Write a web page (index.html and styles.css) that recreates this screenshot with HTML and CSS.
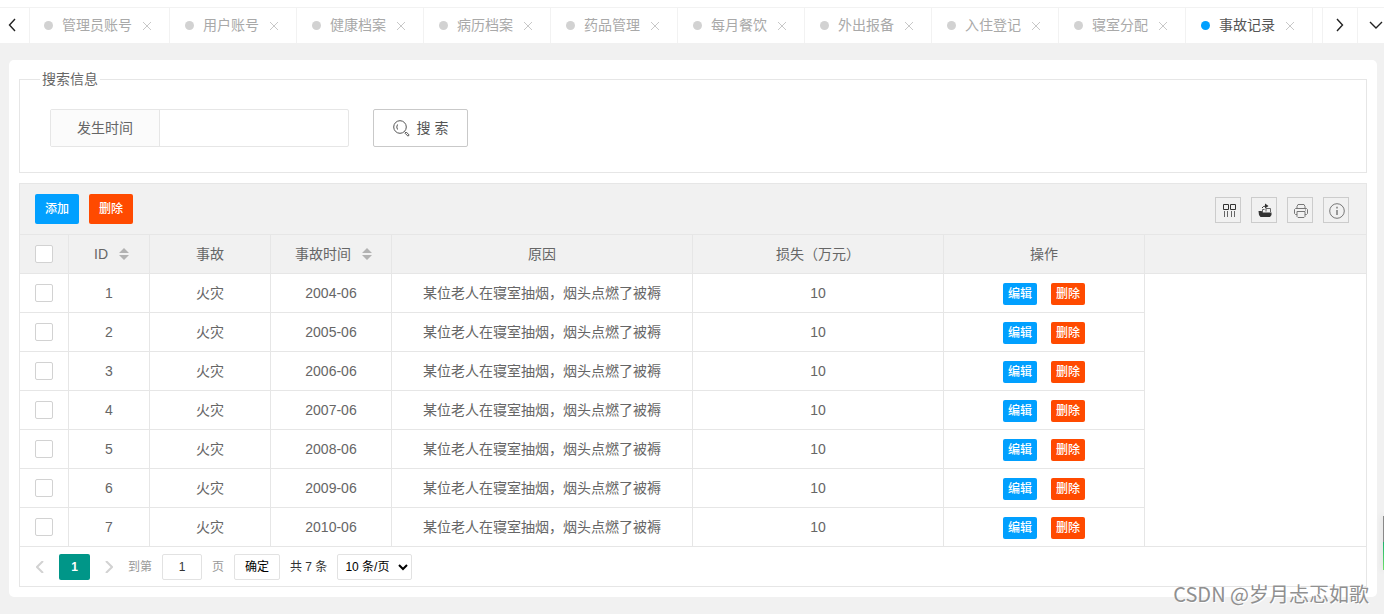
FILE: index.html
```html
<!DOCTYPE html>
<html lang="zh-CN">
<head>
<meta charset="utf-8">
<title>事故记录</title>
<link rel="stylesheet" href="styles.css">
</head>
<body>
<nav class="tabbar">
  <button class="tab-ctl tab-prev" type="button" aria-label="向左"><svg width="8" height="14" viewBox="0 0 8 14"><path d="M7 1 1.500 7 7 13"/></svg></button>
  <div class="tabs">
    <div class="tab"><i class="dot"></i><span>管理员账号</span><button type="button" class="close" aria-label="关闭"><svg width="8" height="8" viewBox="0 0 8 8"><path d="M0 0 8 8M8 0 0 8"/></svg></button></div>
    <div class="tab"><i class="dot"></i><span>用户账号</span><button type="button" class="close" aria-label="关闭"><svg width="8" height="8" viewBox="0 0 8 8"><path d="M0 0 8 8M8 0 0 8"/></svg></button></div>
    <div class="tab"><i class="dot"></i><span>健康档案</span><button type="button" class="close" aria-label="关闭"><svg width="8" height="8" viewBox="0 0 8 8"><path d="M0 0 8 8M8 0 0 8"/></svg></button></div>
    <div class="tab"><i class="dot"></i><span>病历档案</span><button type="button" class="close" aria-label="关闭"><svg width="8" height="8" viewBox="0 0 8 8"><path d="M0 0 8 8M8 0 0 8"/></svg></button></div>
    <div class="tab"><i class="dot"></i><span>药品管理</span><button type="button" class="close" aria-label="关闭"><svg width="8" height="8" viewBox="0 0 8 8"><path d="M0 0 8 8M8 0 0 8"/></svg></button></div>
    <div class="tab"><i class="dot"></i><span>每月餐饮</span><button type="button" class="close" aria-label="关闭"><svg width="8" height="8" viewBox="0 0 8 8"><path d="M0 0 8 8M8 0 0 8"/></svg></button></div>
    <div class="tab"><i class="dot"></i><span>外出报备</span><button type="button" class="close" aria-label="关闭"><svg width="8" height="8" viewBox="0 0 8 8"><path d="M0 0 8 8M8 0 0 8"/></svg></button></div>
    <div class="tab"><i class="dot"></i><span>入住登记</span><button type="button" class="close" aria-label="关闭"><svg width="8" height="8" viewBox="0 0 8 8"><path d="M0 0 8 8M8 0 0 8"/></svg></button></div>
    <div class="tab"><i class="dot"></i><span>寝室分配</span><button type="button" class="close" aria-label="关闭"><svg width="8" height="8" viewBox="0 0 8 8"><path d="M0 0 8 8M8 0 0 8"/></svg></button></div>
    <div class="tab active"><i class="dot"></i><span>事故记录</span><button type="button" class="close" aria-label="关闭"><svg width="8" height="8" viewBox="0 0 8 8"><path d="M0 0 8 8M8 0 0 8"/></svg></button></div>
  </div>
  <button class="tab-ctl tab-next" type="button" aria-label="向右"><svg width="8" height="14" viewBox="0 0 8 14"><path d="M1 1 6.500 7 1 13"/></svg></button>
  <button class="tab-ctl tab-more" type="button" aria-label="更多"><svg width="14" height="8" viewBox="0 0 14 8"><path d="M1 1 7 7 13 1"/></svg></button>
</nav>

<main class="card">
  <fieldset class="search">
    <legend>搜索信息</legend>
    <form class="search-form">
      <div class="field"><label for="time">发生时间</label><input id="time" type="text"></div>
      <button class="search-btn" type="button"><svg width="17" height="17" viewBox="0 0 17 17"><circle cx="7" cy="7" r="6.300"/><path d="M4.500 4.500Q3 7 4.500 9.500M11.500 11.500l1 1M12 13.200l1.200-1.200 3 3-1.200 1.200z"/></svg>搜 索</button>
    </form>
  </fieldset>

  <section class="grid">
    <div class="toolbar">
      <button class="btn blue" type="button">添加</button>
      <button class="btn red" type="button">删除</button>
      <div class="tools">
        <button type="button" aria-label="筛选列"><svg width="16" height="16" viewBox="0 0 16 16"><path class="dark" d="M2.500 1.500h5v5h-5zM9.500 1.500h5v5h-5z"/><path d="M3.500 8v6M6.500 8v6M10.500 8v6M13.500 8v6"/></svg></button>
        <button type="button" aria-label="导出"><svg width="16" height="16" viewBox="0 0 16 16"><path d="M5.500 9V6.500h2M9 8.500V5.500h4.500V9"/><path class="dark" d="M5 5Q6 3 9 3"/><path class="solid" d="M8 .5 11.500 3 8 5.500zM1.500 8h3l1.500 1.500h8.500V12L13 14H3.500L2 12z"/></svg></button>
        <button type="button" aria-label="打印"><svg width="16" height="16" viewBox="0 0 16 16"><path class="gray" d="M4 5.500V3.500l1-2h6l1 2v2M4 11.500H2.500l-1-1v-4l1-1h11l1 1v4l-1 1H12M4 8.500h8v5l-1 1H5l-1-1zM12 7h1"/></svg></button>
        <button type="button" aria-label="提示"><svg width="16" height="16" viewBox="0 0 16 16"><circle class="gray" cx="8" cy="8" r="7.300"/><path class="info" d="M8 3.700v1.800M8 7v5"/></svg></button>
      </div>
    </div>

    <table>
      <colgroup><col class="c-check"><col class="c-id"><col class="c-mid"><col class="c-mid"><col class="c-reason"><col class="c-loss"><col class="c-act"><col></colgroup>
      <thead>
        <tr><th><input type="checkbox" aria-label="全选"></th><th>ID<svg class="sort" width="10" height="12" viewBox="0 0 10 12"><path d="M5 0l5 5H0zM0 7h10l-5 5z"/></svg></th><th>事故</th><th>事故时间<svg class="sort" width="10" height="12" viewBox="0 0 10 12"><path d="M5 0l5 5H0zM0 7h10l-5 5z"/></svg></th><th>原因</th><th>损失（万元）</th><th>操作</th><th class="rest"></th></tr>
      </thead>
      <tbody>
        <tr><td><input type="checkbox" aria-label="选择 1"></td><td>1</td><td>火灾</td><td>2004-06</td><td>某位老人在寝室抽烟，烟头点燃了被褥</td><td>10</td><td><div class="acts"><button type="button" class="mini blue">编辑</button><button type="button" class="mini red">删除</button></div></td><td class="rest"></td></tr>
        <tr><td><input type="checkbox" aria-label="选择 2"></td><td>2</td><td>火灾</td><td>2005-06</td><td>某位老人在寝室抽烟，烟头点燃了被褥</td><td>10</td><td><div class="acts"><button type="button" class="mini blue">编辑</button><button type="button" class="mini red">删除</button></div></td><td class="rest"></td></tr>
        <tr><td><input type="checkbox" aria-label="选择 3"></td><td>3</td><td>火灾</td><td>2006-06</td><td>某位老人在寝室抽烟，烟头点燃了被褥</td><td>10</td><td><div class="acts"><button type="button" class="mini blue">编辑</button><button type="button" class="mini red">删除</button></div></td><td class="rest"></td></tr>
        <tr><td><input type="checkbox" aria-label="选择 4"></td><td>4</td><td>火灾</td><td>2007-06</td><td>某位老人在寝室抽烟，烟头点燃了被褥</td><td>10</td><td><div class="acts"><button type="button" class="mini blue">编辑</button><button type="button" class="mini red">删除</button></div></td><td class="rest"></td></tr>
        <tr><td><input type="checkbox" aria-label="选择 5"></td><td>5</td><td>火灾</td><td>2008-06</td><td>某位老人在寝室抽烟，烟头点燃了被褥</td><td>10</td><td><div class="acts"><button type="button" class="mini blue">编辑</button><button type="button" class="mini red">删除</button></div></td><td class="rest"></td></tr>
        <tr><td><input type="checkbox" aria-label="选择 6"></td><td>6</td><td>火灾</td><td>2009-06</td><td>某位老人在寝室抽烟，烟头点燃了被褥</td><td>10</td><td><div class="acts"><button type="button" class="mini blue">编辑</button><button type="button" class="mini red">删除</button></div></td><td class="rest"></td></tr>
        <tr><td><input type="checkbox" aria-label="选择 7"></td><td>7</td><td>火灾</td><td>2010-06</td><td>某位老人在寝室抽烟，烟头点燃了被褥</td><td>10</td><td><div class="acts"><button type="button" class="mini blue">编辑</button><button type="button" class="mini red">删除</button></div></td><td class="rest"></td></tr>
      </tbody>
    </table>

    <div class="pager">
      <button type="button" class="arrow" aria-label="上一页"><svg width="8" height="12" viewBox="0 0 8 12"><path d="M7 0 1 6l6 6"/></svg></button>
      <button type="button" class="current">1</button>
      <button type="button" class="arrow next" aria-label="下一页"><svg width="8" height="12" viewBox="0 0 8 12"><path d="M1 0l6 6-6 6"/></svg></button>
      <label class="skip" for="page">到第</label>
      <input id="page" type="text" value="1">
      <span class="skip">页</span>
      <button type="button" class="ok">确定</button>
      <span class="count">共 7 条</span>
      <select aria-label="每页条数"><option>10 条/页</option></select>
    </div>
  </section>
</main>
<div class="side-widget"></div>
<div class="watermark">CSDN @岁月忐忑如歌</div>
</body>
</html>
```

FILE: styles.css
```css
* { box-sizing: border-box; }

body {
  margin: 0;
  min-height: 100vh;
  position: relative;
  overflow: hidden;
  background: #f1f1f1;
  color: #666;
  font: 14px/20px "Liberation Sans", "Noto Sans CJK SC", sans-serif;
}

button, input, select {
  margin: 0;
  padding: 0;
  border: 0;
  background: none;
  color: inherit;
  font: inherit;
}

svg { display: block; fill: none; stroke: currentColor; }

/* tab bar */
.tabbar {
  display: flex;
  height: 43px;
  padding-top: 7px;
  background: linear-gradient(#fff 7px, #f2f2f2 7px, #f2f2f2 8px, #fff 8px);
}
.tab-ctl {
  flex: none;
  display: flex;
  align-items: center;
  justify-content: center;
  color: #222;
  stroke-width: 1.4;
}
.tab-prev { width: 30px; padding-right: 6px; border-right: 1px solid #f2f2f2; }
.tab-next { width: 35px; border-left: 1px solid #f2f2f2; }
.tab-more { width: 27px; padding-left: 10px; border-left: 1px solid #f2f2f2; }
.tabs { flex: 1; min-width: 0; display: flex; overflow: hidden; }
.tab {
  flex: none;
  display: flex;
  align-items: center;
  padding: 0 18px 0 14px;
  border-right: 1px solid #f2f2f2;
  color: #a9a9a9;
}
.tab + .tab { padding-left: 15px; }
.dot { width: 9px; height: 9px; margin-right: 9px; border-radius: 50%; background: #d2d2d2; }
.close { margin-left: 11px; padding-top: 2px; color: #c8c8c8; }
.tab.active { color: #555; }
.tab.active .dot { background: #01a0ff; }

/* page card */
.card {
  margin: 17px 7px 0 9px;
  padding: 10px;
  border-radius: 5px;
  background: #fff;
}
.search {
  margin: 0 0 10px;
  padding: 20px 30px 25px;
  border: 1px solid #e6e6e6;
}
.search legend { margin-left: -10px; padding: 0 2px; line-height: 19px; }
.search-form { display: flex; gap: 24px; }
.field { display: flex; height: 38px; border: 1px solid #e6e6e6; border-radius: 2px; }
.field label {
  width: 109px;
  border-right: 1px solid #e6e6e6;
  background: #fbfbfb;
  line-height: 36px;
  text-align: center;
}
.field input { width: 188px; padding: 0 10px; }
.search-btn {
  display: flex;
  align-items: center;
  justify-content: center;
  gap: 7px;
  width: 95px;
  height: 38px;
  border: 1px solid #c9c9c9;
  border-radius: 2px;
  color: #555;
}

/* data grid */
.grid { border: 1px solid #e6e6e6; }
.toolbar {
  display: flex;
  gap: 10px;
  padding: 10px 17px 10px 15px;
  border-bottom: 1px solid #e6e6e6;
  background: #f1f1f1;
}
.btn, .mini {
  border-radius: 2px;
  color: #fff;
  font-size: 12px;
  font-weight: 500;
}
.btn { width: 44px; height: 30px; }
.mini { width: 34px; height: 22px; line-height: 22px; }
.blue { background: #01a0ff; }
.red { background: #ff4a00; }
.tools { display: flex; gap: 10px; margin: 3px 0 0 auto; }
.tools button {
  display: flex;
  align-items: center;
  justify-content: center;
  width: 26px;
  height: 26px;
  padding: 2px 0 0 2px;
  border: 1px solid #ccc;
  color: #666;
}
.dark { stroke: #333; }
.solid { fill: #333; stroke: none; }
.gray { stroke: #777; }
.info { stroke: #999; stroke-width: 2; }

table { width: 100%; table-layout: fixed; border-spacing: 0; }
.c-check { width: 49px; }
.c-id { width: 81px; }
.c-mid { width: 121px; }
.c-reason { width: 301px; }
.c-loss { width: 251px; }
.c-act { width: 201px; }
th, td {
  height: 39px;
  padding: 0;
  border-right: 1px solid #e6e6e6;
  border-bottom: 1px solid #e6e6e6;
  font-weight: 400;
  text-align: center;
  white-space: nowrap;
}
th { background: #f1f1f1; }
.rest { border-right: 0; }
td.rest, tbody tr:last-child td { border-bottom: 0; }
tbody tr:last-child td { height: 38px; }
.sort { display: inline-block; margin: 0 -5px 0 11px; vertical-align: -1px; fill: #b2b2b2; stroke: none; }
input[type="checkbox"] {
  appearance: none;
  display: block;
  width: 18px;
  height: 18px;
  margin: 0 auto;
  border: 1px solid #d2d2d2;
  border-radius: 2px;
  background: #fff;
}
.acts { display: flex; justify-content: center; gap: 14px; padding-top: 2px; }

/* pagination */
.pager {
  display: flex;
  align-items: center;
  gap: 10px;
  height: 40px;
  padding: 0 16px;
  border-top: 1px solid #e6e6e6;
  color: #333;
  font-size: 12px;
}
.pager > * { flex: none; }
.pager .arrow { width: 8px; margin-right: 5px; color: #d2d2d2; stroke-width: 2; }
.pager .next { margin: 0 5px; }
.pager .current {
  width: 31px;
  height: 26px;
  border-radius: 2px;
  background: #009688;
  color: #fff;
  font-weight: 700;
}
.skip { color: #999; }
.pager input, .ok, .pager select { height: 26px; border: 1px solid #e2e2e2; border-radius: 2px; background: #fff; }
.pager input { width: 40px; text-align: center; }
.ok { width: 46px; color: #000; }
.pager select { width: 75px; padding-left: 3px; color: #000; }

/* overlays */
.side-widget {
  position: absolute;
  right: 0;
  top: 516px;
  width: 1px;
  height: 54px;
  background: linear-gradient(#888 26px, #1bb36b 26px, #6fe06a);
  box-shadow: 0 0 6px rgba(0, 0, 0, .25);
}
.watermark {
  position: absolute;
  right: 15px;
  bottom: 5px;
  color: #909090;
  font: 20px/30px "Noto Sans CJK SC", sans-serif;
  text-shadow: 1px 1px 0 #fff;
}
```
